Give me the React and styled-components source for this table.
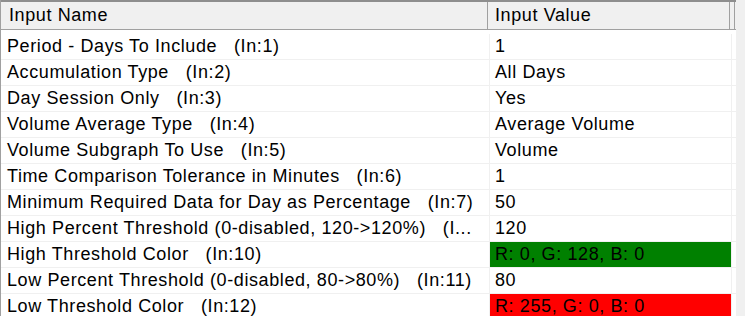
import React from 'react';
import styled, { createGlobalStyle } from 'styled-components';

const GlobalStyle = createGlobalStyle`
  html, body {
    margin: 0;
    padding: 0;
    background: #ffffff;
  }
  body {
    font-family: "Liberation Sans", Arial, sans-serif;
  }
`;

const Frame = styled.div`
  width: 745px;
  height: 316px;
  overflow: hidden;
  display: flex;
  background: #ffffff;
`;

const ListView = styled.div`
  width: 736px;
  flex: none;
  display: flex;
  flex-direction: column;
  border-left: 1px solid #a0a0a0;
  box-sizing: border-box;
`;

const ScrollTrack = styled.div`
  flex: 1;
  background: #f0f0f0;
`;

const Header = styled.div`
  display: grid;
  grid-template-columns: 487px 242px 5px 1fr;
  height: 30px;
  box-sizing: border-box;
  border-top: 2px solid #8e8e8e;
  border-bottom: 1px solid #a0a0a0;
  background: #f0f0f0;
`;

const HeaderCell = styled.div`
  border-right: 1px solid #a0a0a0;
  padding-left: ${(p) => p.$pad}px;
  font-size: 18px;
  letter-spacing: 0.6px;
  line-height: 27px;
  color: #000;
  white-space: nowrap;
  overflow: hidden;

  &:last-child {
    border-right: none;
  }
`;

const Body = styled.div`
  padding-top: 4px;
  display: flex;
  flex-direction: column;
`;

const Row = styled.div`
  display: grid;
  grid-template-columns: 489px 242px 1fr;
  height: 26px;
  flex: none;
  box-sizing: border-box;
  border-bottom: 1px solid #f0f0f0;
`;

const NameCell = styled.div`
  border-right: 1px solid #f0f0f0;
  padding-left: 6px;
  font-size: 18px;
  letter-spacing: 0.6px;
  line-height: 25px;
  color: #000;
  white-space: pre;
  overflow: hidden;
`;

const ValueCell = styled.div`
  border-right: 1px solid #f0f0f0;
  padding-left: 5px;
  font-size: 18px;
  letter-spacing: 0.6px;
  line-height: 25px;
  color: #000;
  white-space: pre;
  overflow: hidden;
  background: ${(p) => p.$swatch || 'transparent'};
`;

const inputs = [
  { name: 'Period - Days To Include   (In:1)', value: '1' },
  { name: 'Accumulation Type   (In:2)', value: 'All Days' },
  { name: 'Day Session Only   (In:3)', value: 'Yes' },
  { name: 'Volume Average Type   (In:4)', value: 'Average Volume' },
  { name: 'Volume Subgraph To Use   (In:5)', value: 'Volume' },
  { name: 'Time Comparison Tolerance in Minutes   (In:6)', value: '1' },
  { name: 'Minimum Required Data for Day as Percentage   (In:7)', value: '50' },
  { name: 'High Percent Threshold (0-disabled, 120->120%)   (I...', value: '120' },
  { name: 'High Threshold Color   (In:10)', value: 'R: 0, G: 128, B: 0', swatch: '#008000' },
  { name: 'Low Percent Threshold (0-disabled, 80->80%)   (In:11)', value: '80' },
  { name: 'Low Threshold Color   (In:12)', value: 'R: 255, G: 0, B: 0', swatch: '#ff0000' },
];

export default function App() {
  return (
    <>
      <GlobalStyle />
      <Frame>
        <ListView>
          <Header>
            <HeaderCell $pad={8}>Input Name</HeaderCell>
            <HeaderCell $pad={7}>Input Value</HeaderCell>
            <HeaderCell $pad={0} />
            <HeaderCell $pad={0} />
          </Header>
          <Body>
            {inputs.map((item) => (
              <Row key={item.name}>
                <NameCell>{item.name}</NameCell>
                <ValueCell $swatch={item.swatch}>{item.value}</ValueCell>
                <div />
              </Row>
            ))}
          </Body>
        </ListView>
        <ScrollTrack />
      </Frame>
    </>
  );
}
